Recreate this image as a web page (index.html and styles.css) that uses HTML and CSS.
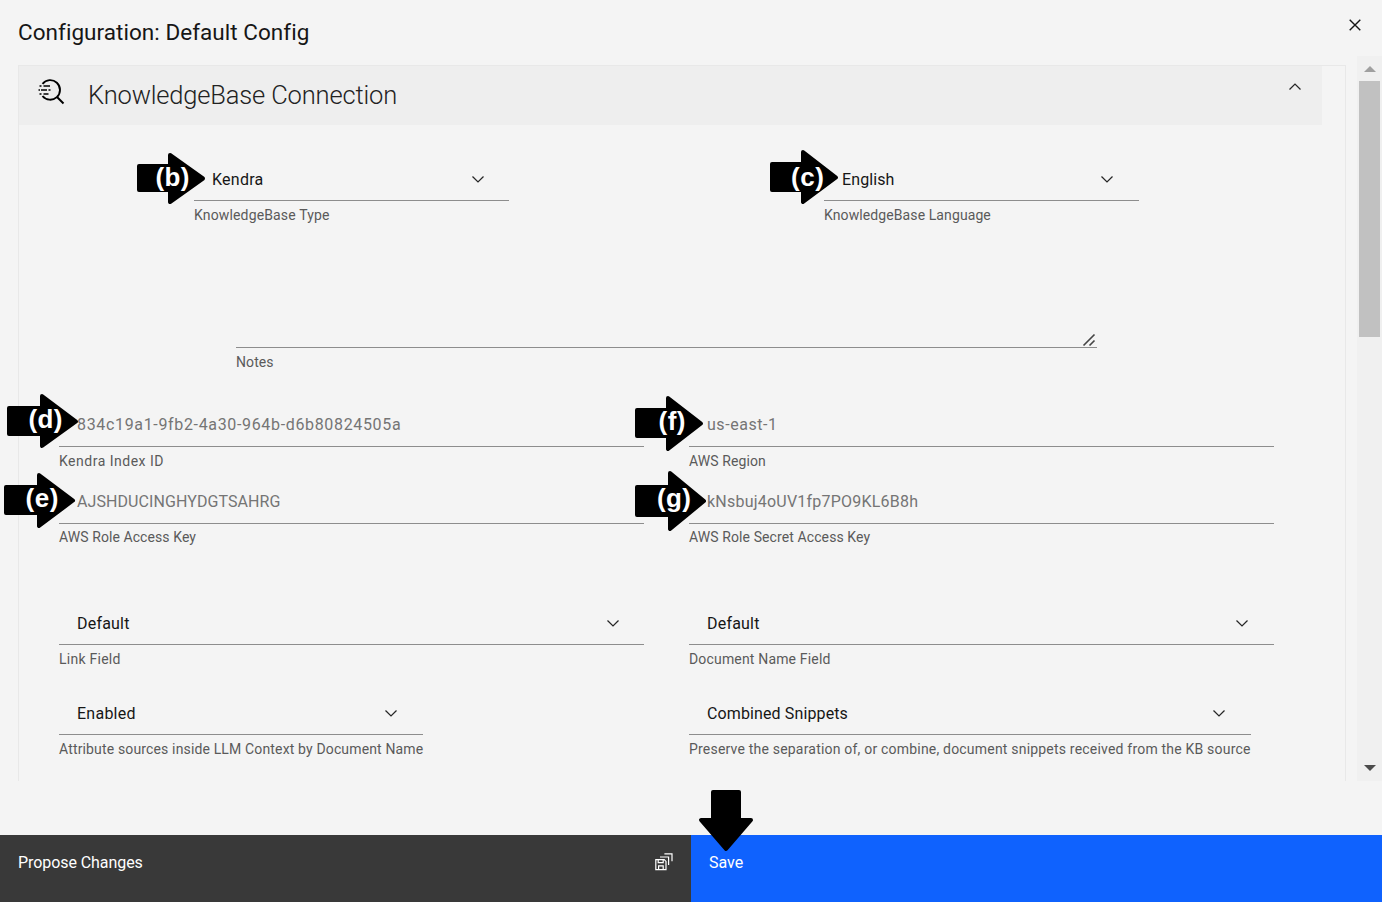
FILE: index.html
```html
<!DOCTYPE html>
<html lang="en">
<head>
<meta charset="utf-8">
<title>Configuration: Default Config</title>
<link rel="stylesheet" href="styles.css">
</head>
<body>
<svg width="0" height="0" class="defs">
  <symbol id="chevron" viewBox="0 0 12 7"><path d="M.5.5 6 5.900 11.500.5" fill="none" stroke="currentColor" stroke-width="1.300"/></symbol>
</svg>
<div class="modal">
  <header class="modal-header">
    <h1 class="title"><span class="t-title">Configuration: Default Config</span></h1>
    <svg class="close" viewBox="0 0 12 12"><path d="M.7.7 11.3 11.3M11.3.7.7 11.3" stroke="#161616" stroke-width="1.4"/></svg>
  </header>
  <div class="modal-body">
    <section class="panel">
      <div class="panel-header">
        <svg class="search-icon" viewBox="0 0 28 28"><g fill="none" stroke="#000" stroke-width="1.900"><path d="M4.500 5.800A9.800 9.800 0 1 1 4.500 18"/><path d="M19 19 25.500 25.500"/><path d="M5.500 8H12M3 12h6M5.500 16H10.500M1.500 8h2M.5 12h1.500M10.500 12h2M1.500 16h2" stroke-width="1.700"/></g></svg>
        <h2 class="section-title"><span class="t-section">KnowledgeBase Connection</span></h2>
        <svg class="chevron chevron-up"><use href="#chevron"/></svg>
      </div>
      <div class="form">
        <div class="row row-kb">
          <div class="field"><div class="control"><span class="t-kendra">Kendra</span><svg class="chevron"><use href="#chevron"/></svg></div><div class="label"><span class="t-kbtype">KnowledgeBase Type</span></div></div>
          <div class="field"><div class="control"><span class="t-english">English</span><svg class="chevron"><use href="#chevron"/></svg></div><div class="label"><span class="t-kblang">KnowledgeBase Language</span></div></div>
        </div>
        <div class="field notes"><div class="control control-notes"><svg class="grip" viewBox="0 0 14 14"><path d="M1.500 12.500 12.500 1.500M7.500 12.500 12.500 7.500" stroke="#444" stroke-width="1.600"/></svg></div><div class="label"><span class="t-notes">Notes</span></div></div>
        <div class="row row-index">
          <div class="field"><div class="control muted"><span class="t-id">834c19a1-9fb2-4a30-964b-d6b80824505a</span></div><div class="label"><span class="t-index">Kendra Index ID</span></div></div>
          <div class="field"><div class="control muted"><span class="t-useast">us-east-1</span></div><div class="label"><span class="t-region">AWS Region</span></div></div>
        </div>
        <div class="row row-key">
          <div class="field"><div class="control muted"><span class="t-akey">AJSHDUCINGHYDGTSAHRG</span></div><div class="label"><span class="t-role">AWS Role Access Key</span></div></div>
          <div class="field"><div class="control muted"><span class="t-skey">kNsbuj4oUV1fp7PO9KL6B8h</span></div><div class="label"><span class="t-secret">AWS Role Secret Access Key</span></div></div>
        </div>
        <div class="row row-link">
          <div class="field"><div class="control"><span class="t-default">Default</span><svg class="chevron"><use href="#chevron"/></svg></div><div class="label"><span class="t-link">Link Field</span></div></div>
          <div class="field"><div class="control"><span class="t-default">Default</span><svg class="chevron"><use href="#chevron"/></svg></div><div class="label"><span class="t-docname">Document Name Field</span></div></div>
        </div>
        <div class="row row-attr">
          <div class="field attr"><div class="control"><span class="t-enabled">Enabled</span><svg class="chevron"><use href="#chevron"/></svg></div><div class="label"><span class="t-attr">Attribute sources inside LLM Context by Document Name</span></div></div>
          <div class="field snippets"><div class="control"><span class="t-combined">Combined Snippets</span><svg class="chevron"><use href="#chevron"/></svg></div><div class="label"><span class="t-preserve">Preserve the separation of, or combine, document snippets received from the KB source</span></div></div>
        </div>
      </div>
    </section>
    <div class="scrollbar">
      <svg class="arrow-up" viewBox="0 0 12 6"><path d="M0 6 6 0 12 6z" fill="#a0a0a0"/></svg>
      <div class="thumb"></div>
      <svg class="arrow-down" viewBox="0 0 12 6"><path d="M0 0h12L6 6z" fill="#4c4c4c"/></svg>
    </div>
  </div>
  <footer class="footer">
    <div class="btn secondary"><span class="t-propose">Propose Changes</span>
      <svg class="save-icon" viewBox="0 0 18 18"><g fill="none" stroke="#fff" stroke-width="1.2"><path d="M.8 6.600h8.400L11 8.400v8.200H.8zM3.200 6.600v3h5v-3M3.600 16.600v-3.800h4.600v3.800M5 4h8.600v8M9.400.8h7.600v7.400"/></g></svg>
    </div>
    <div class="btn primary"><span class="t-save">Save</span></div>
  </footer>
</div>
<svg class="callouts" width="1382" height="902" viewBox="0 0 1382 902">
  <g stroke="#000" stroke-width="4" stroke-linejoin="round">
    <path d="M139 166h31V155L203 178.500 170 202V190H139z"/>
    <path d="M772 164h31V152L836 177.500 803 202V190H772z"/>
    <path d="M9 408h33V396L76 421.500 42 446V434H9z"/>
    <path d="M6 487h33V475L73 500.500 39 526V513H6z"/>
    <path d="M637 410h31V398L701 423.500 668 449V436H637z"/>
    <path d="M637 487h33V473L704 501 670 529V515H637z"/>
    <path d="M713 792h26v28h12L726 849 701 820h12z"/>
  </g>
  <g class="callout-text">
    <text x="172.500" y="186" textLength="34">(b)</text>
    <text x="807.500" y="186" textLength="33">(c)</text>
    <text x="45.500" y="428" textLength="34">(d)</text>
    <text x="42" y="507" textLength="33">(e)</text>
    <text x="672" y="430" textLength="27">(f)</text>
    <text x="674" y="507" textLength="34">(g)</text>
  </g>
</svg>
</body>
</html>
```
FILE: styles.css
```css
* { box-sizing: border-box; }
body { margin: 0; background: #f4f4f4; font-family: Roboto, "Liberation Sans", sans-serif; color: #161616; overflow: hidden; }
h1, h2 { margin: 0; font-weight: 400; }
span { white-space: nowrap; }
.defs { position: absolute; }
.modal { width: 1382px; height: 902px; display: flex; flex-direction: column; }
.modal-header { height: 65px; display: flex; justify-content: space-between; padding: 16px 21px 0 18px; }
.title { font-size: 22.5px; line-height: 32px; }
.close { width: 12px; height: 12px; margin-top: 3px; }
.modal-body { height: 770px; display: flex; justify-content: space-between; padding: 0 0 54px 18px; }
.panel { width: 1328px; border: solid #e8e8e8; border-width: 1px 1px 0; }
.panel-header { width: 1303px; height: 59px; background: #eee; display: flex; padding: 0 21px 0 19px; }
.search-icon { width: 28px; height: 28px; margin-top: 12px; }
.section-title { flex: 1; margin-left: 22px; font-size: 25.5px; line-height: 58px; font-weight: 300; color: #222; }
.chevron { width: 12px; height: 7px; color: #262626; flex: none; }
.chevron-up { margin-top: 17px; transform: rotate(180deg); }
.form { padding: 33px 71px 0 40px; }
.row { display: grid; grid-template-columns: 585px 585px; column-gap: 45px; }
.row-kb { grid-template-columns: 315px 315px; column-gap: 315px; margin-left: 135px; }
.control { height: 43px; border-bottom: 1px solid #8d8d8d; padding: 0 25px 0 18px; display: flex; align-items: center; justify-content: space-between; font-size: 16px; }
.field:nth-child(2) .control, .attr .control { padding-right: 26px; }
.label { margin-top: 5px; font-size: 14px; line-height: 18px; color: #5a5a5a; }
.muted { color: #757575; padding-bottom: 2px; }
.field.notes { width: 861px; margin: 80px 0 0 177px; }
.field.notes .control-notes { height: 44px; padding: 0 1px 0 0; align-items: flex-end; justify-content: flex-end; }
.grip { width: 14px; height: 14px; }
.row-index { margin-top: 33px; }
.row-key { margin-top: 11px; }
.row-key .label { margin-top: 4px; }
.row-link { margin-top: 56px; }
.row-attr { margin-top: 24px; }
.attr { width: 364px; }
.snippets { width: 562px; }
.scrollbar { width: 25px; margin-top: -9px; background: #f0f0f0; display: flex; flex-direction: column; align-items: center; padding: 10px 0 10px; }
.arrow-up, .arrow-down { width: 12px; height: 6px; }
.thumb { width: 21px; height: 256px; margin-top: 9px; background: #c1c1c1; }
.arrow-down { margin-top: auto; }
.footer { height: 67px; display: flex; color: #fff; font-size: 16px; }
.btn { width: 691px; display: flex; justify-content: space-between; padding: 18px 18px 0; line-height: 20px; }
.secondary { background: #393939; }
.primary { background: #0f62fe; }
.save-icon { width: 18px; height: 18px; }
.callouts { position: absolute; left: 0; top: 0; }
.callout-text { fill: #fff; font: bold 26px "Liberation Sans", Arial, sans-serif; text-anchor: middle; }

/* Tracking per text */
.t-title { letter-spacing: .04px; }
.t-section { letter-spacing: -.16px; }
.t-kendra, .t-enabled, .t-link { letter-spacing: .25px; }
.t-kbtype, .t-attr { letter-spacing: .15px; }
.t-english, .t-kblang, .t-region, .t-secret { letter-spacing: .1px; }
.t-id { letter-spacing: .66px; }
.t-index { letter-spacing: .5px; }
.t-useast { letter-spacing: .55px; }
.t-akey, .t-role, .t-notes { letter-spacing: .08px; }
.t-skey { letter-spacing: .22px; }
.t-default, .t-preserve { letter-spacing: .2px; }
.t-docname { letter-spacing: .17px; }
.t-combined { letter-spacing: .12px; }
.t-propose { letter-spacing: -.07px; }
```
